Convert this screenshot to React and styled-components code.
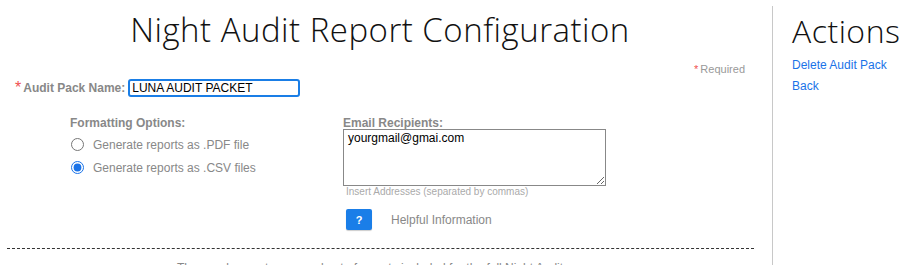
import styled, { createGlobalStyle } from 'styled-components';

const GlobalStyle = createGlobalStyle`
  body {
    margin: 0;
    background: #fff;
    font-family: 'Liberation Sans', Arial, sans-serif;
    overflow: hidden;
  }
`;

const Page = styled.div`
  display: flex;
  width: 914px;
  height: 265px;
  overflow: hidden;
`;

const Main = styled.div`
  width: 772px;
  flex-shrink: 0;
`;

const Title = styled.h1`
  margin: 7px 0 0;
  width: 760px;
  text-align: center;
  font-family: 'Open Sans', sans-serif;
  font-weight: 300;
  font-size: 33px;
  line-height: 45px;
  letter-spacing: 0.5px;
  color: #111;
`;

const RequiredNote = styled.div`
  width: 745px;
  margin-top: 11px;
  text-align: right;
  font-size: 11px;
  color: #999;
`;

const Star = styled.span`
  color: #f05050;
  margin-right: 2px;
`;

const NameRow = styled.div`
  display: flex;
  align-items: center;
  margin: 4px 0 0 15px;
`;

const Label = styled.label`
  font-size: 12px;
  line-height: 14px;
  font-weight: bold;
  color: #888;
`;

const NameInput = styled.input`
  margin-left: 3px;
  width: 172px;
  height: 18px;
  box-sizing: border-box;
  border: 2px solid #1a7ee6;
  border-radius: 3px;
  padding: 0 2px;
  font-family: 'Liberation Sans', Arial, sans-serif;
  font-size: 12px;
  color: #000;
  outline: none;
`;

const Options = styled.div`
  display: grid;
  grid-template-columns: 273px 280px;
  margin: 19px 0 0 70px;
`;

const Column = styled.div`
  display: flex;
  flex-direction: column;
`;

const RadioRow = styled.label`
  display: flex;
  align-items: center;
  height: 23px;
  font-size: 12px;
  color: #888;
  input {
    margin: 0 9px 0 1px;
    width: 13px;
    height: 13px;
    accent-color: #1a73e8;
  }
`;

const FirstRadio = styled(RadioRow)`
  margin-top: 3px;
`;

const EmailBox = styled.textarea`
  margin: -1px 0 0;
  width: 263px;
  height: 57px;
  box-sizing: border-box;
  border: 1px solid #888;
  padding: 1px 4px;
  font-family: 'Liberation Sans', Arial, sans-serif;
  font-size: 12px;
  color: #000;
  resize: both;
`;

const Hint = styled.div`
  margin: 0 0 0 3px;
  font-size: 10px;
  color: #aaa;
`;

const HelpRow = styled.div`
  display: flex;
  align-items: center;
  margin: 12px 0 0 3px;
`;

const HelpButton = styled.button`
  width: 26px;
  height: 21px;
  border: none;
  border-radius: 2px;
  background: #1a7ee8;
  color: #fff;
  font-family: 'Liberation Sans', Arial, sans-serif;
  font-weight: bold;
  font-size: 11px;
  box-shadow: 0 1px 1px rgba(0, 0, 0, 0.2);
  padding: 0;
`;

const HelpText = styled.span`
  margin-left: 19px;
  font-size: 12px;
  color: #888;
`;

const Divider = styled.hr`
  margin: 18px 0 0 7px;
  width: 747px;
  border: none;
  border-top: 1px dashed #333;
`;

const Footnote = styled.p`
  margin: 12px 0 0;
  width: 740px;
  text-align: center;
  font-size: 12px;
  color: #888;
`;

const Sidebar = styled.aside`
  margin-top: 6px;
  border-left: 1px solid #c8c8c8;
  padding-left: 19px;
  flex: 1;
`;

const SideTitle = styled.h2`
  margin: 5px 0 0;
  font-family: 'Open Sans', sans-serif;
  font-weight: 300;
  font-size: 32px;
  line-height: 40px;
  letter-spacing: 0.5px;
  color: #111;
`;

const ActionList = styled.nav`
  margin-top: 4px;
`;

const ActionLink = styled.a`
  display: block;
  font-size: 12px;
  line-height: 21px;
  color: #1a73e8;
  text-decoration: none;
`;

const App = () => {
  return (
    <>
      <GlobalStyle />
      <Page>
        <Main>
          <Title>Night Audit Report Configuration</Title>
          <RequiredNote>
            <Star>*</Star>Required
          </RequiredNote>
          <NameRow>
            <Star>*</Star>
            <Label>Audit Pack Name:</Label>
            <NameInput defaultValue='LUNA AUDIT PACKET' />
          </NameRow>
          <Options>
            <Column>
              <Label>Formatting Options:</Label>
              <FirstRadio>
                <input type='radio' name='format' />
                Generate reports as .PDF file
              </FirstRadio>
              <RadioRow>
                <input type='radio' name='format' defaultChecked />
                Generate reports as .CSV files
              </RadioRow>
            </Column>
            <Column>
              <Label>Email Recipients:</Label>
              <EmailBox defaultValue='yourgmail@gmai.com' />
              <Hint>Insert Addresses (separated by commas)</Hint>
              <HelpRow>
                <HelpButton>?</HelpButton>
                <HelpText>Helpful Information</HelpText>
              </HelpRow>
            </Column>
          </Options>
          <Divider />
          <Footnote>
            These sub-reports are a subset of reports included for the full Night Audit
          </Footnote>
        </Main>
        <Sidebar>
          <SideTitle>Actions</SideTitle>
          <ActionList>
            <ActionLink href='#'>Delete Audit Pack</ActionLink>
            <ActionLink href='#'>Back</ActionLink>
          </ActionList>
        </Sidebar>
      </Page>
    </>
  );
};

export default App;
